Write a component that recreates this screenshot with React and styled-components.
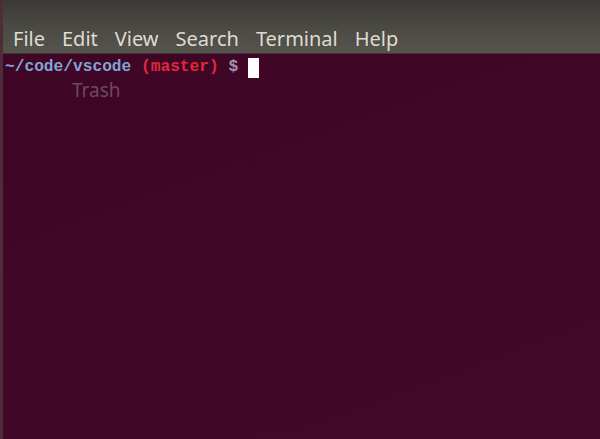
import React from 'react';
import styled, { createGlobalStyle } from 'styled-components';

const Global = createGlobalStyle`
  html, body {
    margin: 0;
    padding: 0;
    width: 600px;
    height: 439px;
    overflow: hidden;
    background: #410726;
  }
`;

const Window = styled.div`
  display: flex;
  flex-direction: column;
  width: 600px;
  height: 439px;
  border-left: 3px solid #4d2d38;
  box-sizing: border-box;
  background: linear-gradient(160deg, #3e0524 0%, #410726 50%, #430927 100%);
`;

const MenuBar = styled.div`
  display: flex;
  align-items: flex-end;
  gap: 17px;
  height: 54px;
  padding: 0 0 1px 10px;
  box-sizing: border-box;
  background: linear-gradient(to bottom, #3b3a36 0%, #4a4943 50%, #55544d 100%);
  border-bottom: 1px solid #4a3038;
`;

const MenuItem = styled.span`
  font-family: 'Noto Sans', 'Open Sans', sans-serif;
  font-size: 20px;
  line-height: 26px;
  color: #dfdbd2;
`;

const Screen = styled.div`
  flex: 1;
  padding: 3px 0 0 2px;
  font-family: 'Liberation Mono', 'DejaVu Sans Mono', monospace;
  font-size: 16.2px;
  font-weight: bold;
  line-height: 21px;
`;

const PromptLine = styled.div`
  display: flex;
  align-items: center;
  white-space: pre;
`;

const Part = styled.span`
  color: ${(p) => p.$color};
`;

const Cursor = styled.span`
  display: inline-block;
  width: 11px;
  height: 20px;
  background: #ffffff;
`;

const Ghost = styled.div`
  padding-left: 67px;
  margin-top: 2px;
  font-family: 'Noto Sans', 'Open Sans', sans-serif;
  font-weight: normal;
  font-size: 19px;
  color: #6d4a5a;
`;

export default function App() {
  return (
    <>
      <Global />
      <Window>
        <MenuBar>
          <MenuItem>File</MenuItem>
          <MenuItem>Edit</MenuItem>
          <MenuItem>View</MenuItem>
          <MenuItem>Search</MenuItem>
          <MenuItem>Terminal</MenuItem>
          <MenuItem>Help</MenuItem>
        </MenuBar>
        <Screen>
          <PromptLine>
            <Part $color="#80a5d8">~/code/vscode </Part>
            <Part $color="#e2283c">(master) </Part>
            <Part $color="#a892b0">$ </Part>
            <Cursor />
          </PromptLine>
          <Ghost>Trash</Ghost>
        </Screen>
      </Window>
    </>
  );
}
